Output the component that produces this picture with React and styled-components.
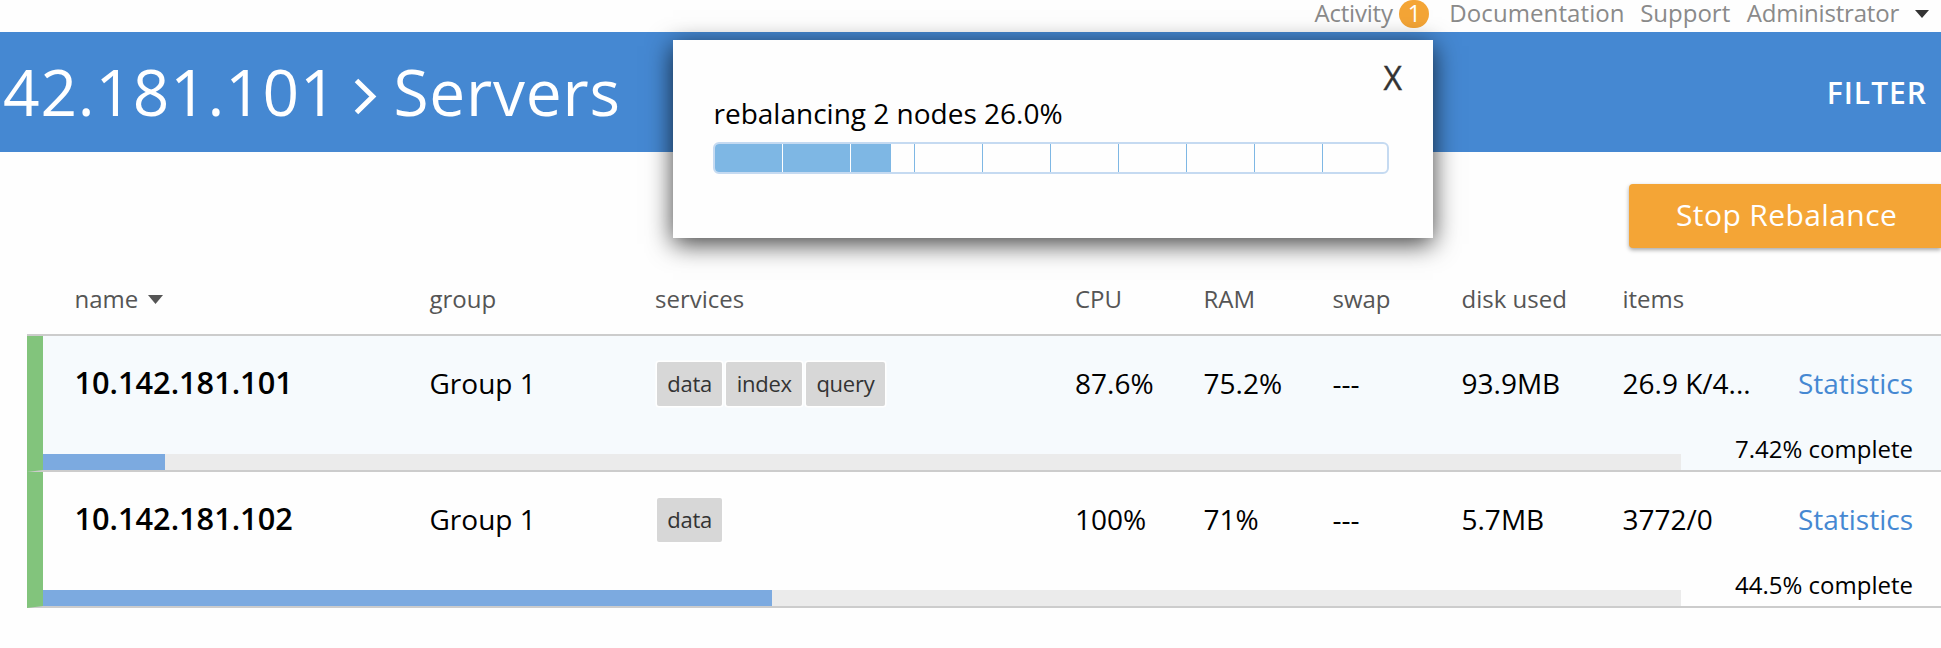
import React from 'react';
import styled, { createGlobalStyle } from 'styled-components';

const GlobalStyle = createGlobalStyle`
  *, *::before, *::after { box-sizing: border-box; }
  body {
    margin: 0;
    background: #fefefe;
    color: #000;
    font-family: "Open Sans", "Noto Sans", sans-serif;
    font-size: 28px;
  }
`;

const Page = styled.div`
  position: relative;
  width: 1941px;
  height: 648px;
`;

const TopNav = styled.nav`
  display: flex;
  align-items: flex-start;
  justify-content: flex-end;
  height: 32px;
  padding-right: 12px;
`;

const NavLink = styled.a`
  margin-right: ${({ $gap }) => $gap}px;
  color: #8a8a8a;
  font-size: 24px;
  letter-spacing: ${({ $tracking }) => $tracking || 0}px;
  line-height: 25px;
  white-space: nowrap;
`;

const Badge = styled.span`
  width: 30px;
  height: 28px;
  margin-right: 20px;
  border-radius: 14px;
  background: #f4a536;
  color: #fff;
  font-size: 23px;
  line-height: 26px;
  text-align: center;
`;

const NavCaret = styled.svg`
  width: 14px;
  height: 8px;
  margin-top: 10px;
  fill: #333;
`;

const Header = styled.header`
  display: flex;
  align-items: center;
  justify-content: space-between;
  height: 120px;
  padding: 0 14px 0 3px;
  background: #4588d2;
  color: #fff;
`;

const Title = styled.h1`
  display: flex;
  align-items: center;
  margin: 0;
  font-size: 64px;
  font-weight: 400;
  letter-spacing: 0.8px;
  line-height: 118px;
  white-space: nowrap;
`;

const Chevron = styled.svg`
  width: 23px;
  height: 37px;
  margin: 8px 16px 0 17px;
  fill: none;
  stroke: #fff;
  stroke-width: 5;
`;

const FilterButton = styled.button`
  padding: 1px 0 0;
  border: 0;
  background: none;
  color: #fff;
  font: 600 30px/60px "Open Sans", "Noto Sans", sans-serif;
  letter-spacing: 1px;
`;

const Toolbar = styled.div`
  display: flex;
  justify-content: flex-end;
  padding-top: 32px;
`;

const StopButton = styled.button`
  width: 312px;
  height: 64px;
  padding: 0 0 3px 47px;
  border: 0;
  border-radius: 4px 0 0 4px;
  background: #f4a536;
  box-shadow: 0 2px 4px rgba(0, 0, 0, 0.35);
  color: #fff;
  font: 400 30px/61px "Open Sans", "Noto Sans", sans-serif;
  letter-spacing: 0.4px;
  text-align: left;
  white-space: nowrap;
`;

const Table = styled.section`
  margin-left: 27px;
`;

const columns = '355px 225.5px 420px 128.5px 129px 129px 161px';

const TableHead = styled.div`
  display: grid;
  grid-template-columns: ${columns} 1fr;
  height: 88px;
  padding: 15px 28px 0 47.5px;
  border-bottom: 2px solid #ccc;
  color: #555;
  font-size: 24px;
  line-height: 71px;
`;

const SortCaret = styled.svg`
  width: 15px;
  height: 9px;
  margin-left: 10px;
  vertical-align: 4px;
  fill: #555;
`;

const Row = styled.div`
  height: 136px;
  border-left: 16px solid #82c47c;
  border-bottom: 2px solid #ccc;
  background: ${({ $shaded }) => ($shaded ? '#f6fafd' : 'transparent')};
`;

const Cells = styled.div`
  display: grid;
  grid-template-columns: ${columns} 134px 1fr;
  align-items: baseline;
  height: 94px;
  padding: 0 28px 0 31.5px;
  line-height: 92px;
`;

const Cell = styled.span`
  white-space: nowrap;
`;

const HostName = styled(Cell)`
  font-size: 30.7px;
  font-weight: 600;
`;

const Services = styled.div`
  display: flex;
  align-self: start;
  gap: 4px;
  padding: 26px 0 0 2px;
`;

const Service = styled.span`
  height: 44px;
  padding: 0 10.3px;
  border-radius: 2px;
  background: #d7d7d7;
  box-shadow: 0 0 0 1.5px #fff;
  color: #333;
  font-size: 22px;
  letter-spacing: -0.25px;
  line-height: 43px;
`;

const StatsLink = styled.a`
  color: #4588d2;
  text-align: right;
`;

const RowFooter = styled.div`
  display: flex;
  align-items: flex-end;
  justify-content: space-between;
  height: 40px;
  padding-right: 28px;
`;

const Track = styled.div`
  width: 1638px;
  height: 16px;
  background: #ebebeb;
`;

const TrackFill = styled.div`
  height: 100%;
  background: #7caae0;
`;

const Complete = styled.span`
  align-self: flex-start;
  font-size: 24px;
  line-height: 37px;
  white-space: nowrap;
`;

const Popup = styled.aside`
  position: absolute;
  top: 40px;
  left: 673px;
  display: flex;
  flex-direction: column;
  width: 760px;
  height: 198px;
  padding: 18px 44px 0 40px;
  background: #fefefe;
  box-shadow: 0 6px 24px rgba(0, 0, 0, 0.75);
`;

const Close = styled.button`
  align-self: flex-end;
  margin-right: -13px;
  padding: 0;
  border: 0;
  background: none;
  color: #333;
  font: 400 32px/39px "Open Sans", "Noto Sans", sans-serif;
  -webkit-text-stroke: 0.4px #333;
`;

const Message = styled.p`
  margin: 0 0 0 0.5px;
  line-height: 32px;
`;

const Meter = styled.div`
  width: 676px;
  height: 32px;
  margin-top: 13px;
  overflow: hidden;
  border: 2px solid #c5daf1;
  border-radius: 6px;
  background: linear-gradient(90deg, #7eb7e4 1px, transparent 1px) 63px 0 / 68px 100% repeat-x;
`;

const MeterFill = styled.div`
  height: 100%;
  background: linear-gradient(90deg, #fff 1px, #7eb7e4 1px) 67px 0 / 68px 100% repeat-x;
`;

const servers = [
  { name: '10.142.181.101', services: ['data', 'index', 'query'], stats: ['87.6%', '75.2%', '---', '93.9MB', '26.9 K/4...'], progress: 7.42, shaded: true },
  { name: '10.142.181.102', services: ['data'], stats: ['100%', '71%', '---', '5.7MB', '3772/0'], progress: 44.5, shaded: false },
];

function ServerRow({ server }) {
  return (
    <Row $shaded={server.shaded}>
      <Cells>
        <HostName>{server.name}</HostName>
        <Cell>Group 1</Cell>
        <Services>
          {server.services.map((s) => <Service key={s}>{s}</Service>)}
        </Services>
        {server.stats.map((v, i) => <Cell key={i}>{v}</Cell>)}
        <StatsLink>Statistics</StatsLink>
      </Cells>
      <RowFooter>
        <Track><TrackFill style={{ width: `${server.progress}%` }} /></Track>
        <Complete>{server.progress}% complete</Complete>
      </RowFooter>
    </Row>
  );
}

export default function App() {
  return (
    <Page>
      <GlobalStyle />
      <TopNav>
        <NavLink $gap={6.5} $tracking={-0.2}>Activity</NavLink>
        <Badge>1</Badge>
        <NavLink $gap={15.5} $tracking={0.1}>Documentation</NavLink>
        <NavLink $gap={16.5}>Support</NavLink>
        <NavLink $gap={16} $tracking={-0.2}>Administrator</NavLink>
        <NavCaret viewBox="0 0 14 8"><path d="M0 0h14L7 8z" /></NavCaret>
      </TopNav>
      <Header>
        <Title>
          <span>42.181.101</span>
          <Chevron viewBox="0 0 23 37"><path d="M2.5 2.5 18.8 18.5 2.5 34.5" /></Chevron>
          <span>Servers</span>
        </Title>
        <FilterButton>FILTER</FilterButton>
      </Header>
      <Toolbar><StopButton>Stop Rebalance</StopButton></Toolbar>
      <Table>
        <TableHead>
          <span>name<SortCaret viewBox="0 0 15 9"><path d="M0 0h15L7.5 9z" /></SortCaret></span>
          <span>group</span>
          <span>services</span>
          <span>CPU</span>
          <span>RAM</span>
          <span>swap</span>
          <span>disk used</span>
          <span>items</span>
        </TableHead>
        {servers.map((s) => <ServerRow key={s.name} server={s} />)}
      </Table>
      <Popup>
        <Close>X</Close>
        <Message>rebalancing 2 nodes 26.0%</Message>
        <Meter><MeterFill style={{ width: '26.2%' }} /></Meter>
      </Popup>
    </Page>
  );
}
